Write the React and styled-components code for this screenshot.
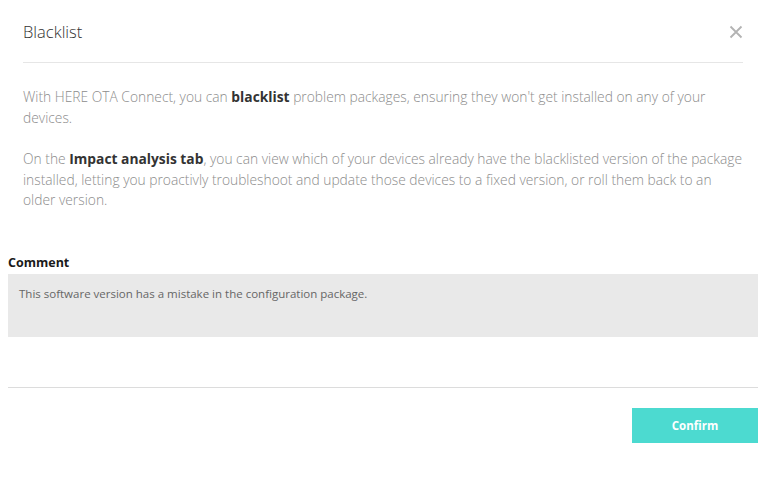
import styled, {createGlobalStyle} from "styled-components";

const GlobalStyle = createGlobalStyle`
	body {
		margin: 0;
		background: #fff;
		font-family: "Open Sans", "Noto Sans", sans-serif;
	}
`;

const Dialog = styled.div`
	padding: 0 10px 0 8px;
	width: 768px;
	box-sizing: border-box;
`;

const Header = styled.div`
	display: flex;
	align-items: center;
	justify-content: space-between;
	height: 62px;
	margin: 0 15px;
	border-bottom: 1px solid #e6e6e6;
`;

const Title = styled.h2`
	margin: 0;
	font-size: 16.5px;
	font-weight: 300;
	color: #333;
`;

const Close = styled.button`
	display: flex;
	padding: 0;
	margin-top: 2px;
	border: 0;
	background: none;
	color: #b3b3b3;
	cursor: pointer;
`;

const Body = styled.div`
	padding: 24px 15px 43px;
`;

const Text = styled.p`
	margin: 0;
	font-size: 13.8px;
	line-height: 20.5px;
	font-weight: 300;
	color: #8c8c8c;

	& + & {
		margin-top: 21px;
	}

	b {
		font-weight: 700;
		color: #333;
	}
`;

const Field = styled.div`
	display: flex;
	flex-direction: column;
	gap: 3px;
`;

const Label = styled.label`
	font-size: 12.5px;
	line-height: 17px;
	font-weight: 700;
	color: #1a1a1a;
`;

const Comment = styled.div`
	height: 63px;
	box-sizing: border-box;
	padding: 12px 11px;
	background: #e9e9e9;
	font-size: 11.5px;
	line-height: 16px;
	color: #666;
`;

const Footer = styled.div`
	display: flex;
	justify-content: flex-end;
	margin-top: 50px;
	padding-top: 20px;
	border-top: 1px solid #dcdcdc;
`;

const Button = styled.button`
	width: 126px;
	height: 35px;
	border: 0;
	background: #4cdad0;
	color: #fff;
	font-family: inherit;
	font-size: 11.5px;
	font-weight: 700;
	cursor: pointer;
`;

export default function App() {
	return (
		<>
			<GlobalStyle />
			<Dialog>
				<Header>
					<Title>Blacklist</Title>
					<Close aria-label="Close">
						<svg width="14" height="14" viewBox="0 0 14 14" fill="none" stroke="currentColor" strokeWidth="1.8">
							<path d="M1.5 1.5l11 11M12.5 1.5l-11 11" />
						</svg>
					</Close>
				</Header>
				<Body>
					<Text>
						With HERE OTA Connect, you can <b>blacklist</b> problem packages, ensuring they won't get
						installed on any of your devices.
					</Text>
					<Text>
						On the <b>Impact analysis tab</b>, you can view which of your devices already have the
						blacklisted version of the package installed, letting you proactivly troubleshoot and update
						those devices to a fixed version, or roll them back to an older version.
					</Text>
				</Body>
				<Field>
					<Label>Comment</Label>
					<Comment>This software version has a mistake in the configuration package.</Comment>
				</Field>
				<Footer>
					<Button>Confirm</Button>
				</Footer>
			</Dialog>
		</>
	);
}
